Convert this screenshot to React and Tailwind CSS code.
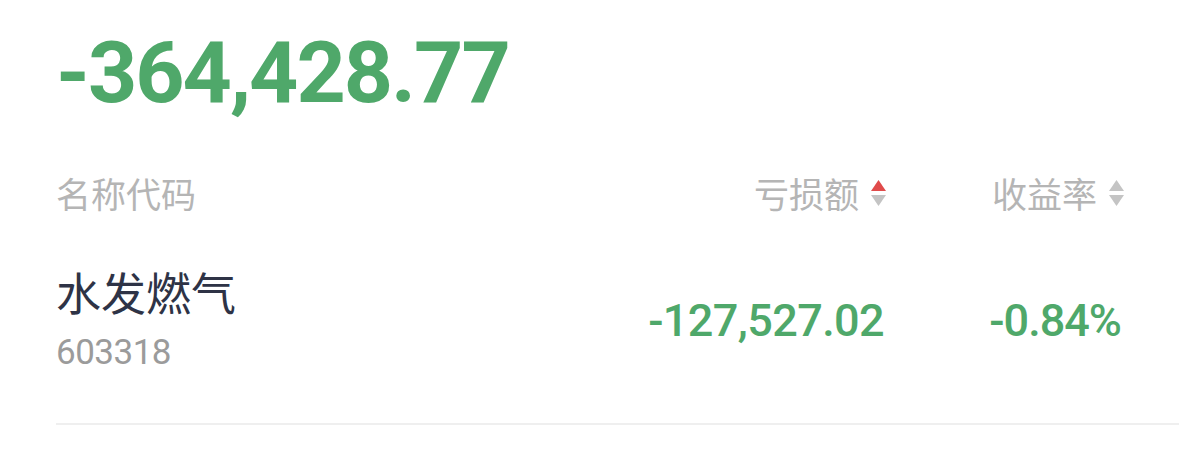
import React from "react";

function SortIcon({ active }) {
  return (
    <svg width="15" height="27" viewBox="0 0 15 27" className="ml-[12px] shrink-0">
      <polygon points="7.5,0 15,11 0,11" fill={active ? "#e04b4b" : "#c4c4c4"} />
      <polygon points="0,15 15,15 7.5,26" fill="#c4c4c4" />
    </svg>
  );
}

export default function App() {
  return (
    <div
      className="w-[1179px] h-[460px] bg-white overflow-hidden"
      style={{ fontFamily: "Roboto, 'Noto Sans CJK SC', sans-serif" }}
    >
      <div className="pl-[56px]">
        <div className="pt-[30px] text-[86px] leading-none font-bold text-[#4fa86a] tracking-[-2px]">
          -364,428.77
        </div>

        <div className="mt-[57px] pr-[55px] flex items-center h-[40px] text-[35px] leading-[40px] text-[#b5b5b5]">
          <div className="flex-1" style={{ fontFamily: "'Noto Sans CJK SC', sans-serif" }}>名称代码</div>
          <div className="flex items-center" style={{ fontFamily: "'Noto Sans CJK SC', sans-serif" }}>
            亏损额
            <SortIcon active />
          </div>
          <div className="w-[238px] flex items-center justify-end" style={{ fontFamily: "'Noto Sans CJK SC', sans-serif" }}>
            收益率
            <SortIcon />
          </div>
        </div>

        <div className="mt-[54px] pb-[50px] border-b-2 border-[#efefef]">
          <div className="pr-[58px] flex items-center">
            <div className="flex-1 flex flex-col">
              <div
                className="text-[45px] leading-[50px] text-[#2e3346]"
                style={{ fontFamily: "'Noto Sans CJK SC', sans-serif" }}
              >
                水发燃气
              </div>
              <div className="mt-[16px] text-[35px] leading-[40px] text-[#9b9b9b] tracking-[-0.5px]">603318</div>
            </div>
            <div className="text-[45px] leading-none font-medium text-[#4fa86a] tracking-[-0.6px]">-127,527.02</div>
            <div className="w-[237px] text-right text-[45px] leading-none font-medium text-[#4fa86a] tracking-[-1px]">-0.84%</div>
          </div>
        </div>
      </div>
    </div>
  );
}
